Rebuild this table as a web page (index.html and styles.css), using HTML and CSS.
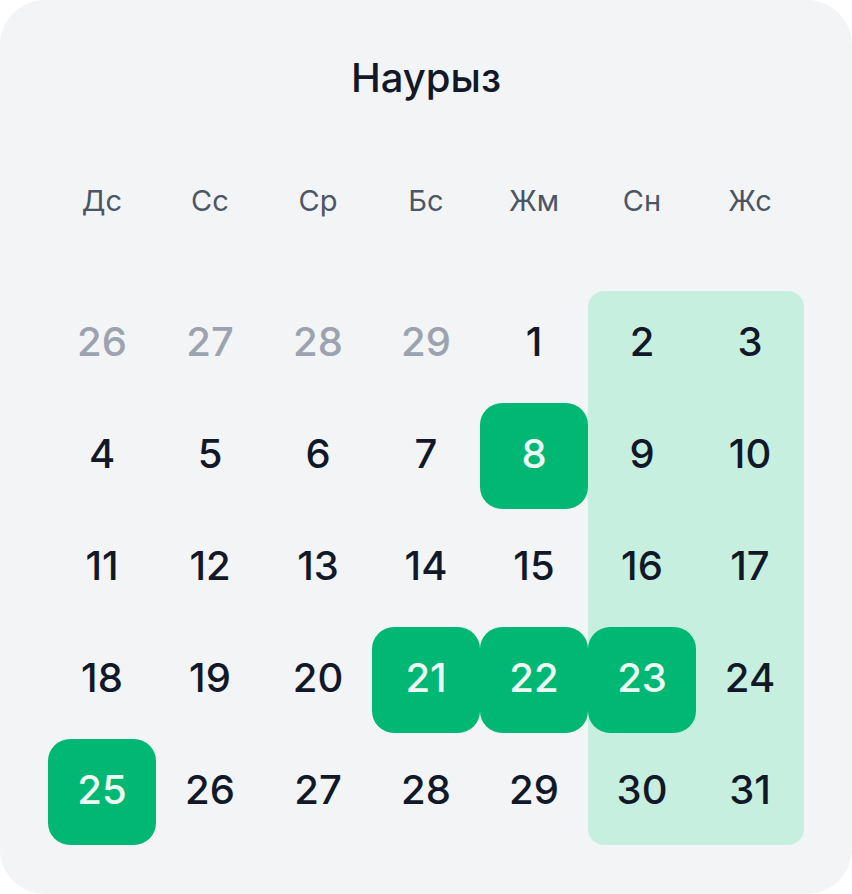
FILE: index.html
```html
<!DOCTYPE html>
<html lang="kk">
<head>
  <meta charset="UTF-8">
  <meta name="viewport" content="width=device-width, initial-scale=1.0">
  <title>Наурыз</title>
  <link rel="stylesheet" href="styles.css">
</head>
<body>
  <div class="calendar">
    <h1 class="month">Наурыз</h1>

    <div class="weekdays">
      <span>Дс</span>
      <span>Сс</span>
      <span>Ср</span>
      <span>Бс</span>
      <span>Жм</span>
      <span>Сн</span>
      <span>Жс</span>
    </div>

    <div class="days">
      <div class="weekend-band"></div>

      <span class="day muted">26</span>
      <span class="day muted">27</span>
      <span class="day muted">28</span>
      <span class="day muted">29</span>
      <span class="day">1</span>
      <span class="day">2</span>
      <span class="day">3</span>

      <span class="day">4</span>
      <span class="day">5</span>
      <span class="day">6</span>
      <span class="day">7</span>
      <span class="day holiday">8</span>
      <span class="day">9</span>
      <span class="day">10</span>

      <span class="day">11</span>
      <span class="day">12</span>
      <span class="day">13</span>
      <span class="day">14</span>
      <span class="day">15</span>
      <span class="day">16</span>
      <span class="day">17</span>

      <span class="day">18</span>
      <span class="day">19</span>
      <span class="day">20</span>
      <span class="day holiday">21</span>
      <span class="day holiday">22</span>
      <span class="day holiday">23</span>
      <span class="day">24</span>

      <span class="day holiday">25</span>
      <span class="day">26</span>
      <span class="day">27</span>
      <span class="day">28</span>
      <span class="day">29</span>
      <span class="day">30</span>
      <span class="day">31</span>
    </div>
  </div>
</body>
</html>
```

FILE: styles.css
```css
body {
  margin: 0;
  background: #fff;
  font-family: Inter, "Noto Sans", sans-serif;
}

.calendar {
  width: 852px;
  height: 894px;
  box-sizing: border-box;
  padding: 0 48px;
  background: #f3f4f6;
  border-radius: 45px;
}

.month {
  margin: 0;
  padding-top: 54px;
  height: 48px;
  line-height: 48px;
  text-align: center;
  font-size: 40px;
  font-weight: 500;
  color: #111827;
}

.weekdays {
  display: grid;
  grid-template-columns: repeat(7, 108px);
  margin-top: 76px;
  height: 44px;
  align-items: center;
}

.weekdays span {
  text-align: center;
  font-size: 29px;
  color: #4b5563;
}

.days {
  position: relative;
  display: grid;
  grid-template-columns: repeat(7, 108px);
  grid-auto-rows: 106px;
  row-gap: 6px;
  margin-top: 69px;
}

.weekend-band {
  position: absolute;
  top: 0;
  bottom: 0;
  left: 540px;
  width: 216px;
  background: #c6efe0;
  border-radius: 16px;
}

.day {
  position: relative;
  display: flex;
  justify-content: center;
  align-items: center;
  padding-bottom: 5px;
  font-size: 40px;
  font-weight: 500;
  color: #111827;
  border-radius: 22px;
}

.day.muted {
  color: #9ca3af;
}

.day.holiday {
  background: #00b874;
  color: #edf9f3;
}
```
